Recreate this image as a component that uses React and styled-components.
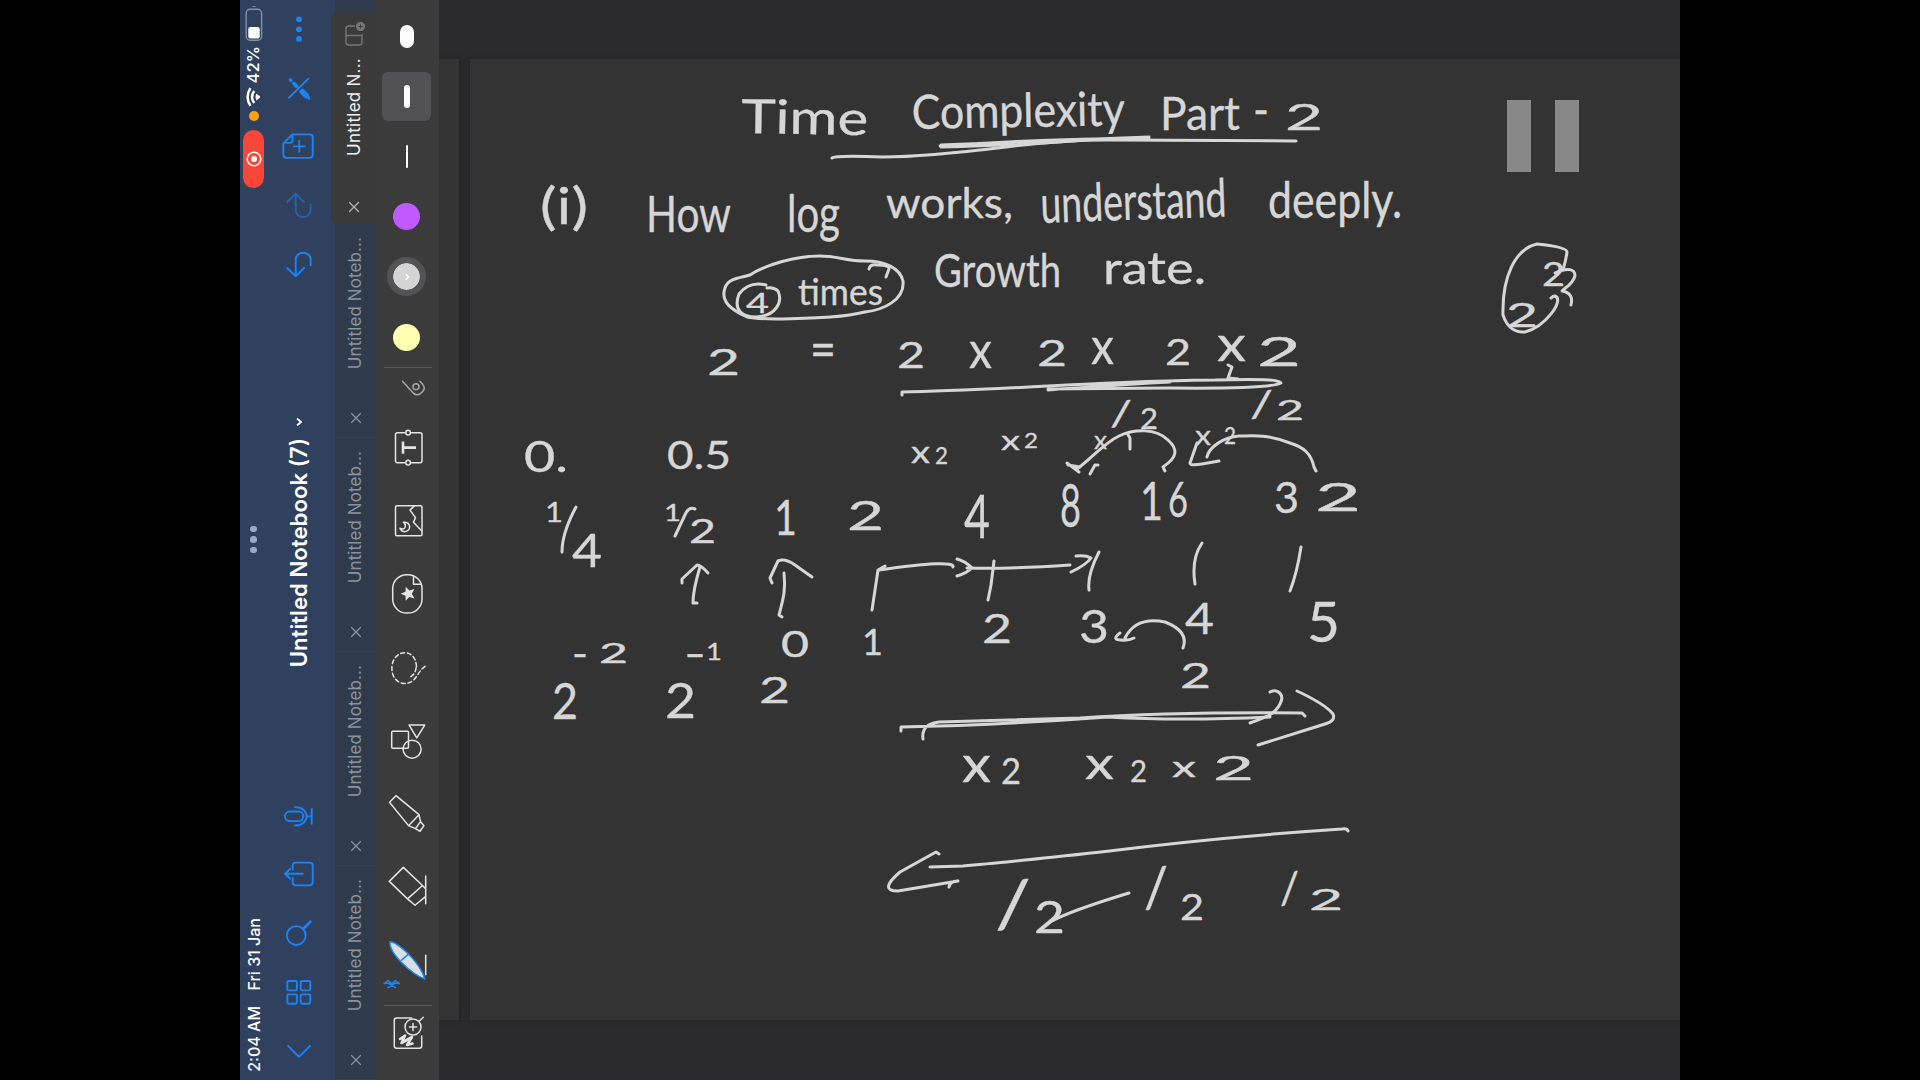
import React from "react";
import styled, { createGlobalStyle } from "styled-components";

const Global = createGlobalStyle`
  html, body { margin: 0; background: #000; }
  * { box-sizing: border-box; }
`;

const blue = "#1b84f5";

const Screen = styled.div`
  width: 1920px;
  height: 1080px;
  display: flex;
  justify-content: center;
  overflow: hidden;
  background: #000;
  font-family: Inter, "Liberation Sans", sans-serif;
`;

const Tablet = styled.div`
  width: 1440px;
  height: 1080px;
  display: flex;
  background: #30415f;
`;

const Upward = styled.span`
  writing-mode: vertical-rl;
  transform: rotate(180deg);
  white-space: pre;
  line-height: 1;
  color: ${(p) => p.$color || "#fff"};
  font-size: ${(p) => p.$size}px;
  font-weight: ${(p) => p.$weight || 400};
  letter-spacing: ${(p) => p.$spacing || 0}px;
`;

const StatusBar = styled.div`
  width: 27px;
  display: flex;
  flex-direction: column;
  justify-content: space-between;
  align-items: center;
`;

const StatusGroup = styled.div`
  flex: 1 1 0;
  display: flex;
  flex-direction: column;
  align-items: center;
  justify-content: ${(p) => (p.$end ? "flex-end" : "flex-start")};
  gap: ${(p) => p.$gap}px;
  padding: 5px 0 ${(p) => (p.$end ? 8 : 0)}px;
`;

const RecordPill = styled.div`
  width: 21px;
  height: 58px;
  border-radius: 10.5px;
  background: #f94638;
  display: flex;
  align-items: center;
  justify-content: center;
`;

const PrivacyDot = styled.div`
  width: 10px;
  height: 10px;
  border-radius: 50%;
  margin-bottom: 5px;
  background: #ff9f14;
`;

const Grabber = styled.div`
  display: flex;
  flex-direction: column;
  gap: 4px;
  padding-top: 7px;
`;

const GrabberDot = styled.i`
  width: 6.6px;
  height: 6.6px;
  border-radius: 50%;
  background: #9aa9c9;
`;

const NavBar = styled.div`
  width: 64px;
  display: flex;
  flex-direction: column;
`;

const NavIcon = styled.svg`
  width: 64px;
  height: 58.7px;
  flex: none;
  fill: none;
  stroke: ${blue};
  stroke-width: 1.9;
  stroke-linecap: round;
  stroke-linejoin: round;
  opacity: ${(p) => (p.$dim ? 0.5 : 1)};
`;

const TitleArea = styled.div`
  flex: 1;
  display: flex;
  flex-direction: column;
  align-items: center;
  justify-content: center;
  gap: 10px;
  padding-top: 4px;
`;

const TabStrip = styled.div`
  width: 45px;
  display: flex;
  flex-direction: column;
  padding-top: 13px;
  background: linear-gradient(90deg, #30415f 4px, #2f3b4b 4px);
`;

const TabItem = styled.div`
  flex: 1 1 0;
  display: flex;
  flex-direction: column;
  align-items: center;
  justify-content: flex-end;
  padding: 0 0 ${(p) => (p.$active ? "10px 1px" : "12px 0")};
  margin-left: ${(p) => (p.$active ? 0 : 4)}px;
  border-radius: ${(p) => (p.$active ? "5px 0 0 5px" : "0")};
  background: ${(p) => (p.$active ? "#3a3a3b" : "#2f3b4b")};
  border-bottom: ${(p) => (p.$active ? "0" : "1px solid #30415f")};
  color: ${(p) => (p.$active ? "#f0f0f0" : "#8a929d")};
`;

const TabIcon = styled.svg`
  width: 24px;
  height: 26px;
  margin-bottom: auto;
  margin-top: 8px;
  fill: none;
  stroke: #77777a;
  stroke-width: 1.4;
`;

const CloseIcon = styled.svg`
  width: 14px;
  height: 14px;
  margin-top: ${(p) => (p.$active ? 44 : 42)}px;
  stroke: ${(p) => (p.$active ? "#b4b4b5" : "#8a929d")};
  stroke-width: 1.3;
  stroke-linecap: round;
`;

const ToolBar = styled.div`
  width: 63px;
  display: flex;
  flex-direction: column;
  align-items: center;
  padding-top: 6px;
  background: #3b3b3c;
`;

const Swatch = styled.div`
  width: 49px;
  height: 49px;
  margin: 5.6px 2px 5.6px 0;
  flex: none;
  border-radius: 6px;
  display: flex;
  align-items: center;
  justify-content: center;
  background: ${(p) => (p.$selected ? "#525255" : "transparent")};
`;

const StrokeSample = styled.i`
  width: ${(p) => p.$w}px;
  height: 23px;
  border-radius: 7px;
  background: #fdfdfd;
`;

const ColourDot = styled.i`
  box-sizing: content-box;
  width: 27px;
  height: 27px;
  border-radius: 50%;
  border: ${(p) => (p.$selected ? "6.5px solid #535356" : "0")};
  background: ${(p) => p.$color};
  background-clip: padding-box;
  display: flex;
  align-items: center;
  justify-content: center;
`;

const Divider = styled.hr`
  width: 48px;
  height: 1px;
  margin: ${(p) => p.$gap || 0}px 0 0;
  border: 0;
  flex: none;
  background: #5a5a5c;
`;

const ToolIcon = styled.svg`
  width: 63px;
  height: ${(p) => p.$h || 73.3}px;
  flex: none;
  fill: none;
  stroke: #e4e4e4;
  stroke-width: 1.5;
  stroke-linecap: round;
  stroke-linejoin: round;
`;

const Workspace = styled.main`
  position: relative;
  flex: 1;
  display: flex;
  gap: 11px;
  padding: 59px 0 60px;
  overflow: hidden;
  background: #2a2a2c;
`;

const PreviousPage = styled.div`
  width: 20px;
  background: #333;
  box-shadow: 1px 0 4px #202022;
`;

const Page = styled.div`
  flex: 1;
  background: #333;
  box-shadow: 0 0 4px #202022;
`;

const Ink = styled.svg`
  display: block;
  width: 1210px;
  height: 961px;
  fill: none;
  stroke: #d6d6d6;
  stroke-width: 3;
  stroke-linecap: round;
  stroke-linejoin: round;
`;

const InkText = styled.text`
  fill: #d6d6d6;
  stroke-width: 0.35;
  font-family: Lato, "Open Sans", sans-serif;
`;

const PauseMark = styled.div`
  position: absolute;
  top: 100px;
  right: 101px;
  display: flex;
  gap: 24px;
`;

const PauseBar = styled.i`
  width: 24px;
  height: 72px;
  background: #888;
`;

const words = [
  ["Time", 741, 868, 133, 34, 1],
  ["Complexity", 912, 1125, 129, 34, -1],
  ["Part", 1160, 1240, 130, 34],
  ["-", 1253, 1269, 126, 34],
  ["2", 1285, 1323, 130, 26],
  ["(i)", 540, 588, 224, 36],
  ["How", 646, 731, 232, 36],
  ["log", 787, 840, 232, 38],
  ["works,", 886, 1013, 218, 30],
  ["understand", 1041, 1227, 223, 38, -2],
  ["deeply.", 1268, 1402, 218, 36],
  ["Growth", 934, 1061, 287, 33],
  ["rate.", 1103, 1206, 284, 32],
  ["4", 746, 769, 313, 20],
  ["times", 798, 883, 305, 26],
  ["2", 707, 740, 375, 27],
  ["=", 810, 836, 367, 36],
  ["2", 897, 925, 368, 27],
  ["x", 969, 992, 368, 36],
  ["2", 1037, 1067, 366, 26],
  ["x", 1091, 1114, 364, 36],
  ["2", 1165, 1191, 365, 27],
  ["x", 1217, 1246, 361, 35],
  ["2", 1257, 1301, 366, 29],
  ["/", 1110, 1132, 426, 25],
  ["2", 1140, 1158, 429, 21],
  ["/", 1250, 1273, 417, 26],
  ["2", 1276, 1304, 420, 19],
  ["x", 911, 930, 463, 22],
  ["2", 935, 948, 464, 17],
  ["x", 1001, 1020, 450, 20],
  ["2", 1024, 1038, 448, 15],
  ["x", 1094, 1107, 449, 18],
  ["x", 1195, 1211, 445, 20],
  ["2", 1224, 1236, 444, 16],
  ["0.", 524, 568, 472, 31],
  ["0.5", 667, 731, 469, 28],
  ["1", 545, 563, 522, 19],
  ["4", 572, 602, 567, 34],
  ["1", 664, 681, 521, 17],
  ["2", 689, 716, 543, 23],
  ["1", 774, 797, 535, 35],
  ["2", 847, 884, 530, 29],
  ["4", 964, 990, 538, 43],
  ["8", 1060, 1081, 527, 43],
  ["1", 1140, 1163, 520, 38],
  ["6", 1168, 1188, 517, 35],
  ["3", 1274, 1299, 513, 31],
  ["2", 1315, 1361, 511, 28],
  ["0", 781, 809, 657, 26],
  ["1", 862, 883, 655, 26],
  ["2", 982, 1012, 643, 29],
  ["3", 1079, 1109, 643, 33],
  ["4", 1185, 1214, 634, 31],
  ["5", 1307, 1340, 642, 40],
  ["2", 1180, 1211, 688, 25],
  ["-", 572, 588, 667, 26],
  ["2", 599, 628, 663, 19],
  ["2", 552, 578, 719, 36],
  ["-", 684, 706, 667, 26],
  ["1", 706, 722, 660, 17],
  ["2", 665, 696, 718, 35],
  ["2", 759, 790, 703, 27],
  ["x", 962, 991, 782, 36],
  ["2", 1001, 1021, 784, 27],
  ["x", 1085, 1114, 779, 32],
  ["2", 1130, 1147, 782, 22],
  ["x", 1172, 1196, 777, 21],
  ["2", 1213, 1254, 780, 24],
  ["/", 995, 1031, 927, 48],
  ["2", 1034, 1065, 933, 32],
  ["/", 1144, 1168, 907, 40],
  ["2", 1180, 1204, 920, 27],
  ["/", 1280, 1299, 904, 32],
  ["2", 1309, 1343, 910, 21],
  ["2", 1542, 1565, 286, 23],
  ["2", 1506, 1538, 327, 23],
];

const strokes = [
  "M832 178Q836 175 883 176Q930 175 1006 164Q1070 154 1087 141L1296 141",
];

const marks = [
  "M832 158Q836 155 883 157Q924 157 1006 147Q1070 139 1115 140L1296 141",
  "M940 146Q1040 139 1149 138M941 147Q1030 145 1098 139M941 145L1149 137",
  "M725 288C728 278 740 278 750 275C765 265 795 256 820 256C838 256 846 261 865 261C885 261 900 268 903 281C905 300 883 310 865 312C845 317 820 318 783 319Q757 319 747 317C732 310 720 302 725 288",
  "M766 285Q749 281 739 294C733 310 742 317 756 317C776 316 783 302 778 291Q774 287 767 288",
  "M869 269Q870 264 877 265Q890 265 889 269L886 277",
  "M902 395V392C990 391 1120 380 1215 380Q1281 378 1281 383Q1270 389 1170 388L1048 389M1048 390C1090 387 1130 384 1170 382",
  "M1228 365L1232 367L1228 378L1238 379",
  "M1165 471L1163 467C1178 457 1178 449 1168 440C1156 428 1134 429 1119 436C1104 443 1090 460 1077 469M1067 463L1079 472M1068 465L1080 467M1090 474L1095 465L1098 465M1127 433L1130 438V449",
  "M1316 471L1314 467C1311 453 1303 447 1290 443C1268 434 1253 436 1239 436C1224 437 1209 447 1207 457M1197 443L1190 463Q1190 466 1202 464L1219 461",
  "M576 507Q562 533 562 552",
  "M695 509Q688 506 684 517L675 536",
  "M682 583V579L697 565Q701 565 708 573M700 567Q693 590 693 603H697",
  "M772 583L770 578L778 561Q785 558 795 565L812 577M784 573C786 590 783 600 779 615L782 617",
  "M872 610L878 570L885 566M879 570Q955 559 953 567M957 559Q965 561 972 568Q967 573 957 576M967 568Q1010 569 1070 565M1076 556Q1086 555 1091 558Q1086 565 1071 572",
  "M994 561L991 585L988 600M1099 552Q1087 575 1089 590M1202 543Q1191 559 1195 584M1301 547Q1297 573 1290 591",
  "M1183 648C1188 635 1178 627 1165 622C1145 618 1132 624 1125 638M1120 633Q1111 640 1121 640Q1128 641 1134 638",
  "M901 731V727Q1000 725 1108 717Q1180 721 1270 717M923 739Q921 724 939 722L1080 718Q1170 712 1302 713L1305 716",
  "M1270 692C1278 688 1285 695 1280 704C1274 716 1262 718 1250 723M1297 691Q1325 704 1333 714Q1336 721 1325 724L1258 745",
  "M1348 831Q1347 828 1342 829Q1220 837 1101 852Q1000 863 963 866L930 867M939 854L936 852L900 872Q878 891 898 891L958 881Q950 881 949 887",
  "M1052 921Q1070 911 1129 893",
  "M1563 270Q1566 260 1567 252Q1567 247 1537 244C1515 249 1502 277 1503 315C1507 327 1515 333 1525 332C1545 327 1565 300 1555 296Q1553 296 1551 298",
  "M1555 273C1568 267 1575 269 1575 276C1572 285 1567 286 1562 291Q1574 293 1571 305",
];

function HandInk() {
  return (
    <Ink viewBox="470 59 1210 961">
      {marks.map((d) => (
        <path key={d} d={d} />
      ))}
      {words.map(([t, x1, x2, y, h, tilt], i) => (
        <InkText
          key={i}
          x={x1}
          y={y}
          fontSize={h / 0.72}
          textLength={x2 - x1}
          lengthAdjust="spacingAndGlyphs"
          transform={tilt ? `rotate(${tilt} ${x1} ${y})` : undefined}
        >
          {t}
        </InkText>
      ))}
    </Ink>
  );
}

function Nav({ children, dim }) {
  return (
    <NavIcon viewBox="-32 -29.35 64 58.7" $dim={dim}>
      {children}
    </NavIcon>
  );
}

function Tool({ children, h = 73.3 }) {
  return (
    <ToolIcon $h={h} viewBox={`-31.5 ${-h / 2} 63 ${h}`}>
      {children}
    </ToolIcon>
  );
}

function Tab({ label, active }) {
  return (
    <TabItem $active={active}>
      {active && (
        <TabIcon viewBox="0 0 24 26">
          <path d="M13 5H7Q4 5 4 8V21Q4 24 7 24H17Q20 24 20 21V13M4 14.5H20" />
          <circle cx="18.5" cy="5.5" r="3.8" fill="#77777a" />
          <path d="M16.5 5.5h4M18.5 3.5v4" stroke="#3a3a3b" strokeWidth="1" />
        </TabIcon>
      )}
      <Upward $size={17} $color="inherit" $spacing={active ? 0.25 : 0.1}>
        {label}
      </Upward>
      <CloseIcon $active={active} viewBox="0 0 14 14">
        <path d="M2.5 2.5l9 9M11.5 2.5l-9 9" />
      </CloseIcon>
    </TabItem>
  );
}

export default function App() {
  return (
    <Screen>
      <Global />
      <Tablet>
        <StatusBar>
          <StatusGroup $gap={4}>
            <svg width="18" height="37" viewBox="0 0 18 37">
              <path d="M6.5 2Q9 0 11.5 2z" fill="#8290aa" />
              <rect x="1.2" y="4.2" width="15.4" height="31" rx="4" fill="none" stroke="#8290aa" strokeWidth="1.4" />
              <rect x="3.3" y="22" width="11.4" height="11.5" rx="2.2" fill="#fff" />
            </svg>
            <Upward $size={16.5} $weight={500}>42%</Upward>
            <svg width="16" height="20" viewBox="0 0 16 20" fill="none" stroke="#fff" strokeWidth="2.5">
              <path d="M4.4 1.2Q-1.2 10 4.4 18.8M8.2 4Q3.8 10 8.2 16" />
              <path d="M14.5 10L10.5 6.6Q8.5 10 10.5 13.4z" fill="#fff" stroke="none" />
            </svg>
            <PrivacyDot />
            <RecordPill>
              <svg width="16" height="16" viewBox="0 0 16 16">
                <circle cx="8" cy="8" r="6.8" fill="none" stroke="#fff" strokeWidth="1.5" />
                <circle cx="8" cy="8" r="3" fill="#fff" />
              </svg>
            </RecordPill>
          </StatusGroup>
          <Grabber>
            <GrabberDot />
            <GrabberDot />
            <GrabberDot />
          </Grabber>
          <StatusGroup $end $gap={16}>
            <Upward $size={16} $weight={500}>Fri 31 Jan</Upward>
            <Upward $size={16} $weight={500}>2:04 AM</Upward>
          </StatusGroup>
        </StatusBar>

        <NavBar>
          <Nav>
            <g fill={blue} stroke="none">
              <circle cy="-10" r="2.9" />
              <circle r="2.9" />
              <circle cy="9.6" r="2.9" />
            </g>
          </Nav>
          <Nav>
            <path d="M9.3 -9.7L-10 9.3" />
            <path d="M-8.6 -8.5L-8.2 -8.1M-5.2 -5L-2.4 -2" strokeWidth="3.6" />
            <path d="M1 3.2L3.2 1L8.6 5.8L10.3 10.6L5.4 8.4z" fill={blue} />
          </Nav>
          <Nav>
            <path d="M-6.5 -12H10.5Q13.7 -12 13.7 -9V8.5Q13.7 11.5 10.5 11.5H-12.5Q-15.7 11.5 -15.7 8.5V-3zM-6.5 -12V-6Q-6.5 -3.5 -9 -3.5H-15M.3 -5.5V5.5M-5.2 0H5.8" />
          </Nav>
          <Nav dim>
            <path d="M-11.7 -3.3L-3.3 -11.7L5 -3.3M-3.3 -11V4.5C-3.3 14 11.7 14 11.7 4.5V-1" />
          </Nav>
          <Nav>
            <path d="M-11.7 3.7L-3.3 12L5 3.7M-3.3 11V-4.5C-3.3 -14 11.7 -14 11.7 -4.5V1" />
          </Nav>
          <TitleArea>
            <svg width="12" height="12" viewBox="0 0 12 12" fill="none" stroke="#fff" strokeWidth="1.8">
              <path d="M4 2.5L8 6L4 9.5" />
            </svg>
            <Upward $size={22.2} $weight={600}>Untitled Notebook (7)</Upward>
          </TitleArea>
          <Nav>
            <rect x="-14" y="-4.8" width="18.3" height="9.6" rx="4.8" />
            <path d="M-4 -9.2C11.5 -9.2 11.5 9.2 -4 9.2M7.7 0H12.5M12.7 -7.5V7.5" />
          </Nav>
          <Nav>
            <path d="M-6.3 -4.5V-8.5Q-6.3 -11.7 -3 -11.7H10.5Q13.7 -11.7 13.7 -8.5V8Q13.7 11 10.5 11H-3Q-6.3 11 -6.3 8V3.5M3.7 -.6H-14M-9 -5.4L-14 -.6L-9 4.2" />
          </Nav>
          <Nav>
            <circle cx="-2.7" cy="2.2" r="9.4" />
            <path d="M4.3 -4.6L11.5 -11.8" strokeWidth="2.6" />
          </Nav>
          <Nav>
            <rect x="-11.7" y="-11.4" width="9.6" height="9.4" rx="1.4" />
            <rect x="1.7" y="-11.4" width="9.6" height="9.4" rx="1.4" />
            <rect x="-11.7" y="2" width="9.6" height="9.4" rx="1.4" />
            <rect x="1.7" y="2" width="9.6" height="9.4" rx="1.4" />
          </Nav>
          <Nav>
            <path d="M-11 -4.5L0 6.5L11 -4.5" />
          </Nav>
        </NavBar>

        <TabStrip>
          <Tab label="Untitled N..." active />
          <Tab label="Untitled Noteb..." />
          <Tab label="Untitled Noteb..." />
          <Tab label="Untitled Noteb..." />
          <Tab label="Untitled Noteb..." />
        </TabStrip>

        <ToolBar>
          <Swatch><StrokeSample $w={14} /></Swatch>
          <Swatch $selected><StrokeSample $w={6} /></Swatch>
          <Swatch><StrokeSample $w={2} /></Swatch>
          <Swatch><ColourDot $color="#bf5aff" /></Swatch>
          <Swatch>
            <ColourDot $color="#d4d4d4" $selected>
              <svg width="8" height="8" viewBox="0 0 8 8" fill="none" stroke="#fff" strokeWidth="1.5">
                <path d="M2.8 1.2L5.6 4L2.8 6.8" />
              </svg>
            </ColourDot>
          </Swatch>
          <Swatch><ColourDot $color="#ffffb2" /></Swatch>
          <Divider />
          <Tool h={42.5}>
            <g stroke="#a8a8a8">
              <path d="M-5 -8L5.5 3.6Q10 8 15 2.5Q19.5 -1.5 12.5 -8" />
              <circle cx="8.5" cy="-2.6" r="3" />
            </g>
          </Tool>
          <Tool>
            <path d="M-3 -15H-10Q-12 -15 -12 -13V13Q-12 15 -10 15H-3M4 -15H12.5Q14.5 -15 14.5 -13V13Q14.5 15 12.5 15H4" />
            <circle cx=".6" cy="-15" r="2.3" />
            <circle cx=".6" cy="15" r="2.3" />
            <path d="M-4.5 -6.2V6.2M-4.5 0H8.5" strokeWidth="2.6" strokeLinecap="butt" />
          </Tool>
          <Tool>
            <rect x="-12" y="-15" width="26.5" height="30" rx="1.5" />
            <path d="M6.5 -14.5L2.5 -10.5L8 -3L6 1.5L14 10M-4 1.5C4 1 4 11 -3 11Q-6.5 10.5 -7.5 7.5C-3 10 0 5.5 -4 1.5z" />
          </Tool>
          <Tool>
            <rect x="-14.8" y="-19" width="29.3" height="38.4" rx="14" />
            <path d="M6 -17V-9.5H13.8" />
            <path d="M-7 0L-2 -2L-1.8 -7L1.8 -3.2L7 -4.6L4.3 0L7 4.8L1.8 3.4L-1.8 7.2L-2 2z" fill="#e4e4e4" stroke="none" />
          </Tool>
          <Tool>
            <path d="M9 -1C8 -20 -13 -19 -15.5 -2C-17 14 -4 19 4 14C10 10 11 3 18 -1.5M8.6 0Q8 7 1 10.5" strokeDasharray="4 2.8" />
          </Tool>
          <Tool>
            <rect x="-15.8" y="-9.3" width="16.8" height="16.8" rx="1" />
            <circle cx="4.6" cy="8.5" r="9" />
            <path d="M1.6 -15.6H17.2L9.3 -2.8z" />
          </Tool>
          <Tool>
            <path d="M-11.5 -18L-18 -11.3L1 12L11.5 1zM11.5 1L13 8L16.5 12L12.5 17.6L8 15L1 12M13 8L8 15" />
          </Tool>
          <Tool>
            <path d="M-4.2 -19.3L-18.2 -5.3L0 12.2L15 -1.2zM0 12.2L7.5 18.6L18 10M15 -1.2L18 2M18.2 -10.7V17" />
          </Tool>
          <Tool>
            <path d="M18.2 -5.3V14" />
            <path d="M-17.5 -19C-10 -19 12 1 17.5 18.5C5 14 -19 -7 -17.5 -19z" fill="#dcdfe2" stroke={blue} />
            <path d="M-6 -.5L1 -6.5" stroke={blue} />
            <path d="M-23.5 22.6H-19L-12 27M-8 22.6H-12.5L-19.5 27M-23 23L-19.5 19.8L-15.8 23.2L-12 19.8L-8.5 23" stroke={blue} strokeWidth="1.5" />
          </Tool>
          <Divider $gap={8} />
          <Tool h={54}>
            <path d="M4 -15H-11Q-13.2 -15 -13.2 -13V13Q-13.2 15.2 -11 15.2H12Q14.2 15.2 14.2 13V3" />
            <circle cx="5.5" cy="-6" r="8" />
            <path d="M5.5 -9.5V-2.5M2 -6H9M11.3 -11.5L15.8 -15.7" />
            <path d="M-7.5 6L-2.5 2.6L-6 10L4.5 4L-.5 12L5 10.5" strokeWidth="2.6" />
          </Tool>
        </ToolBar>

        <Workspace>
          <PreviousPage />
          <Page>
            <HandInk />
          </Page>
          <PauseMark>
            <PauseBar />
            <PauseBar />
          </PauseMark>
        </Workspace>
      </Tablet>
    </Screen>
  );
}
